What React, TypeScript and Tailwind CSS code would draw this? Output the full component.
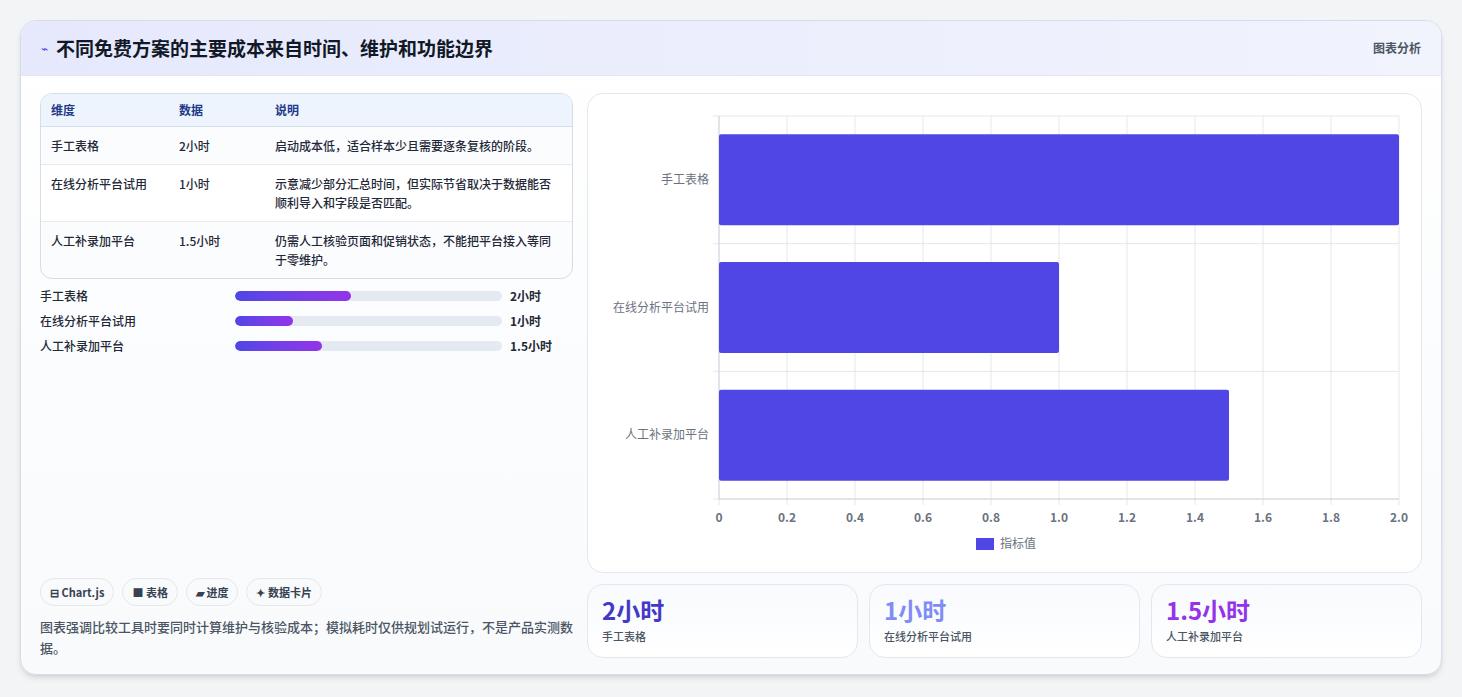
const font = { fontFamily: '"Noto Sans CJK SC", "Noto Sans", sans-serif' };

const rows = [
  { name: "手工表格", data: "2小时", desc: "启动成本低，适合样本少且需要逐条复核的阶段。", v: 2 },
  { name: "在线分析平台试用", data: "1小时", desc: "示意减少部分汇总时间，但实际节省取决于数据能否顺利导入和字段是否匹配。", v: 1 },
  { name: "人工补录加平台", data: "1.5小时", desc: "仍需人工核验页面和促销状态，不能把平台接入等同于零维护。", v: 1.5 },
];

function Chart() {
  const x0 = 131, x1 = 811, y0 = 22, y1 = 405;
  const band = (y1 - y0) / 3;
  return (
    <svg width="833" height="477" className="block">
      {Array.from({ length: 11 }).map((_, i) => {
        const x = x0 + (i * (x1 - x0)) / 10;
        return (
          <g key={i}>
            <line x1={x} y1={y0} x2={x} y2={y1 + 6} stroke="#e5e7eb" />
            <text x={x} y={428} textAnchor="middle" fontSize="12" fill="#6b7280" fontWeight="600" style={font}>
              {i === 0 ? "0" : i === 10 ? "2.0" : (i * 0.2).toFixed(1)}
            </text>
          </g>
        );
      })}
      {[0, 1, 2, 3].map((i) => (
        <line key={i} x1={x0 - 6} y1={y0 + i * band} x2={x1} y2={y0 + i * band} stroke="#e5e7eb" />
      ))}
      <line x1={x0} y1={y0} x2={x0} y2={y1} stroke="#d1d5db" />
      <line x1={x0} y1={y1} x2={x1} y2={y1} stroke="#d1d5db" />
      {rows.map((r, i) => {
        const yc = y0 + band * i + band / 2;
        return (
          <g key={r.name}>
            <rect x={x0} y={yc - 45.5} width={((x1 - x0) * r.v) / 2} height={91} rx="2" fill="#4f46e5" />
            <text x={x0 - 10} y={yc + 4} textAnchor="end" fontSize="12" fill="#6b7280" style={font}>{r.name}</text>
          </g>
        );
      })}
      <rect x={388} y={444} width={18} height={12} fill="#4f46e5" />
      <text x={412} y={454} fontSize="12" fill="#6b7280" style={font}>指标值</text>
    </svg>
  );
}

export default function App() {
  return (
    <div className="min-h-[697px] bg-[#f3f4f6] pt-5 px-5" style={font}>
      <div className="h-[655px] rounded-2xl border border-[#d6dcf0] bg-gradient-to-b from-white to-[#f8fafc] shadow-md overflow-hidden flex flex-col">
        <div className="h-[55px] shrink-0 flex items-center justify-between px-5 bg-gradient-to-r from-[#e6e9fc] to-[#f1f3fd] border-b border-[#e3e7f3]">
          <div className="flex items-center gap-2">
            <span className="text-[#4f46e5] text-xs">⌁</span>
            <h1 className="text-[19px] font-bold text-[#111827]">不同免费方案的主要成本来自时间、维护和功能边界</h1>
          </div>
          <span className="text-xs font-semibold text-[#4b5563]">图表分析</span>
        </div>
        <div className="flex-1 flex gap-[14px] px-[19px] pt-[17px] pb-[18px]">
          <div className="w-[534px] flex flex-col">
            <div className="rounded-xl border border-[#d6dde8] overflow-hidden bg-[#fbfcfe] text-xs">
              <div className="grid grid-cols-[128px_96px_1fr] bg-[#eef4fe] text-[#1e3a8a] font-semibold px-[10px] h-[33px] items-center border-b border-[#d6dde8]">
                <span>维度</span><span>数据</span><span>说明</span>
              </div>
              {rows.map((r, i) => (
                <div key={r.name} className={`grid grid-cols-[128px_96px_1fr] px-[10px] py-[9px] text-[#1f2937] font-medium leading-[19px] ${i < 2 ? "border-b border-[#e5e9f0]" : ""} ${i === 1 ? "bg-white" : ""}`}>
                  <span>{r.name}</span><span>{r.data}</span><span className="pr-2">{r.desc}</span>
                </div>
              ))}
            </div>
            <div className="mt-[10px] flex flex-col gap-[12px]">
              {rows.map((r) => (
                <div key={r.name} className="flex items-center text-xs font-medium text-[#1f2937] h-[13px]">
                  <span className="w-[195px]">{r.name}</span>
                  <div className="w-[267px] h-[10px] rounded-full bg-[#e5e9f1] overflow-hidden">
                    <div className="h-full rounded-full bg-gradient-to-r from-[#4f46e5] to-[#9333ea]" style={{ width: `${(r.v / 4.6) * 100}%` }} />
                  </div>
                  <span className="ml-2 font-bold">{r.data}</span>
                </div>
              ))}
            </div>
            <div className="mt-auto">
              <div className="flex gap-2 text-[11px] font-semibold text-[#374151]">
                {["⊟ Chart.js", "■ 表格", "▰ 进度", "✦ 数据卡片"].map((t) => (
                  <span key={t} className="h-7 px-[9px] rounded-full border border-[#e5e7eb] bg-[#f9fafb] flex items-center">{t}</span>
                ))}
              </div>
              <p className="mt-[10px] text-[13px] leading-[21px] text-[#4b5563] font-medium">
                图表强调比较工具时要同时计算维护与核验成本；模拟耗时仅供规划试运行，不是产品实测数据。
              </p>
            </div>
          </div>
          <div className="flex-1 flex flex-col gap-[11px]">
            <div className="h-[480px] rounded-2xl border border-[#e3e8f0] bg-white overflow-hidden">
              <Chart />
            </div>
            <div className="flex gap-[11px]">
              {[
                { v: "2小时", l: "手工表格", c: "text-[#4338ca]" },
                { v: "1小时", l: "在线分析平台试用", c: "text-[#818cf8]" },
                { v: "1.5小时", l: "人工补录加平台", c: "text-[#9333ea]" },
              ].map((s) => (
                <div key={s.l} className="flex-1 h-[74px] rounded-2xl border border-[#e1e8f3] bg-gradient-to-b from-[#f8fafd] to-white px-[14px] pt-[9px]">
                  <div className={`text-[24px] font-bold leading-[32px] ${s.c}`}>{s.v}</div>
                  <div className="text-[11px] text-[#4b5563] font-medium mt-[2px]">{s.l}</div>
                </div>
              ))}
            </div>
          </div>
        </div>
      </div>
    </div>
  );
}
